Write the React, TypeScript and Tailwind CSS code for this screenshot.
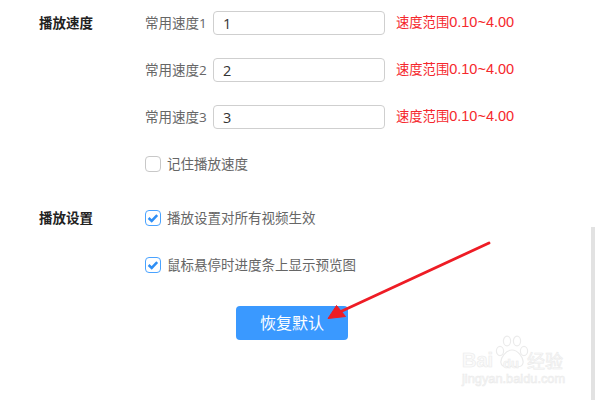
const speeds = ['1', '2', '3'];

function CheckBox({ checked }: { checked: boolean }) {
  if (!checked) {
    return <span className="h-4 w-4 shrink-0 rounded-[4px] border border-[#c8c8c8] bg-white" />;
  }
  return (
    <span className="flex h-4 w-4 shrink-0 items-center justify-center rounded-[4px] border border-[#4aa3ff] bg-white">
      <svg width="12" height="12" viewBox="0 0 12 12" fill="none">
        <path d="M1.6 6 L4.7 8.9 L10.2 3.2" stroke="#2f8ff5" strokeWidth="2.5" />
      </svg>
    </span>
  );
}

function CheckRow({ checked, label }: { checked: boolean; label: string }) {
  return (
    <div className="flex h-6 items-center gap-[6px] text-[13.5px] text-[#666]">
      <CheckBox checked={checked} />
      <span>{label}</span>
    </div>
  );
}

function SectionTitle({ title }: { title: string }) {
  return (
    <div className="flex h-6 w-[145px] shrink-0 items-center pl-[39px] text-[13.5px] font-bold text-[#222]">
      {title}
    </div>
  );
}

export default function App() {
  return (
    <div className="relative h-[400px] w-[600px] overflow-hidden bg-white pt-[11px] [font-family:'Open_Sans','Noto_Sans_CJK_SC',sans-serif]">
      <div className="flex">
        <SectionTitle title="播放速度" />
        <div className="flex flex-col gap-[23px]">
          {speeds.map((speed, i) => (
            <div key={speed} className="flex h-6 items-center">
              <span className="w-[68px] text-[13.5px] text-[#666]">常用速度{i + 1}</span>
              <input
                readOnly
                value={speed}
                className="h-6 w-[172px] rounded-[4px] border border-[#cfcfcf] bg-white px-[9px] text-[14.5px] text-[#333] outline-none"
              />
              <span className="ml-[11px] text-[13.3px] text-[#f5282d] [font-family:'Liberation_Sans','Noto_Sans_CJK_SC',sans-serif]">
                速度范围<span className="text-[14.5px]">0.10~4.00</span>
              </span>
            </div>
          ))}
          <CheckRow checked={false} label="记住播放速度" />
        </div>
      </div>

      <div className="mt-[30px] flex">
        <SectionTitle title="播放设置" />
        <div className="flex flex-col gap-[23px]">
          <CheckRow checked label="播放设置对所有视频生效" />
          <CheckRow checked label="鼠标悬停时进度条上显示预览图" />
        </div>
      </div>

      <div className="mt-[29px] pl-[236px]">
        <button className="h-[34px] w-[112px] rounded-[4px] bg-[#3a99ff] text-base text-white">恢复默认</button>
      </div>

      {/* scrollbar */}
      <div className="absolute right-[5px] top-[227px] h-[173px] w-1 bg-[#e2e2e2]" />

      {/* annotation arrow */}
      <svg className="absolute left-0 top-0" width="600" height="400" viewBox="0 0 600 400" fill="none">
        <path d="M489 243 L342 311" stroke="#ee1c25" strokeWidth="2.8" strokeLinecap="round" />
        <path d="M328 318.5 L336.5 305.5 L345.5 316.5 Z" fill="#ee1c25" stroke="#ee1c25" strokeLinejoin="round" />
      </svg>

      {/* watermark */}
      <div className="absolute left-[462px] top-[335px] h-[50px] w-[104px] text-[#fafafa] [-webkit-text-stroke:0.6px_#ebebeb] [font-family:'Liberation_Sans',sans-serif]">
        <svg className="absolute left-[33px] top-0" width="34" height="34" viewBox="0 0 34 34" fill="none" stroke="#ebebeb" strokeWidth="1.2">
          <ellipse cx="5" cy="16" rx="3.6" ry="4.6" />
          <ellipse cx="12" cy="6" rx="3.6" ry="4.8" />
          <ellipse cx="22" cy="6" rx="3.6" ry="4.8" />
          <ellipse cx="29" cy="16" rx="3.6" ry="4.6" />
          <path d="M17 15 C11 15 5 23 6 28 C7 33 13 32 17 31 C21 32 27 33 28 28 C29 23 23 15 17 15 Z" />
        </svg>
        <div className="absolute left-0 top-[16px] flex h-[18px] w-full items-center leading-none">
          <span className="w-[33px] text-[20px] font-bold">Bai</span>
          <span className="w-[32px] pt-[6px] text-center text-[13px] font-bold">du</span>
          <span className="text-[18px] [font-family:'Noto_Sans_CJK_SC',sans-serif]">经验</span>
        </div>
        <div className="absolute left-0 top-[38px] text-[12.8px] leading-none">jingyan.baidu.com</div>
      </div>
    </div>
  );
}
